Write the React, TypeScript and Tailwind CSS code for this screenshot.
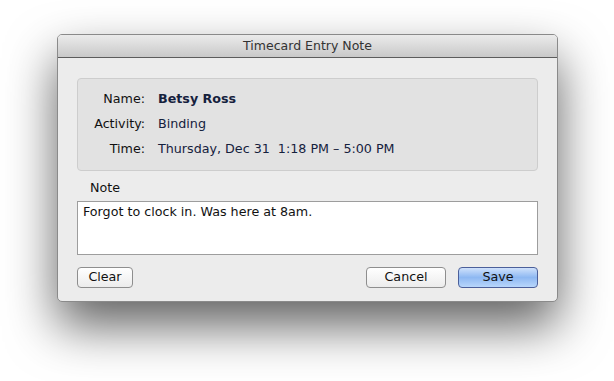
export default function App() {
  const rows = [
    { label: "Name:", value: "Betsy Ross", bold: true },
    { label: "Activity:", value: "Binding" },
    { label: "Time:", value: "Thursday, Dec 31\u00a0\u00a01:18 PM \u2013 5:00 PM" },
  ];

  return (
    <div className="w-[614px] h-[381px] bg-white pt-[34px] pl-[57px] font-['DejaVu_Sans',sans-serif] text-[12.7px] text-[#111]">
      <div className="w-[501px] h-[268px] rounded-[5px] bg-[#ececec] border border-[#8a8a8a] shadow-[0_24px_50px_rgba(0,0,0,0.62)] flex flex-col overflow-hidden">
        {/* barra de título */}
        <div className="h-[23px] shrink-0 bg-gradient-to-b from-[#ebebeb] to-[#c9c9c9] border-b border-[#5c5c5c] flex items-center justify-center">
          <span className="text-[12.5px] text-[#333]">Timecard Entry Note</span>
        </div>

        <div className="flex-1 flex flex-col pl-[19px] pr-[19px] pt-[20px]">
          <div className="h-[93px] rounded-[4px] bg-[#e2e2e2] border border-[#cdcdcd] pt-[7px] flex flex-col">
            {rows.map((r) => (
              <div key={r.label} className="h-[25px] flex items-center">
                <span className="w-[67px] text-right text-[#111]">{r.label}</span>
                <span className={`ml-[13px] text-[#15213d] ${r.bold ? "font-bold" : ""}`}>{r.value}</span>
              </div>
            ))}
          </div>

          <div className="mt-[8px] ml-[13px] h-[22px] leading-[18px]">Note</div>

          <div className="h-[54px] bg-white border border-[#9d9d9d] px-[5px] pt-[1px] leading-[18px]">
            Forgot to clock in. Was here at 8am.
          </div>

          <div className="mt-[12px] flex items-center">
            <button className="w-[56px] h-[21px] rounded-[4px] border border-[#8e8e8e] bg-gradient-to-b from-[#ffffff] to-[#ececec] leading-none">
              Clear
            </button>
            <div className="flex-1" />
            <button className="w-[80px] h-[21px] rounded-[4px] border border-[#8e8e8e] bg-gradient-to-b from-[#ffffff] to-[#ececec] leading-none">
              Cancel
            </button>
            <button className="ml-[12px] w-[80px] h-[21px] rounded-[4px] border border-[#4b5f9a] bg-gradient-to-b from-[#cfe1fb] via-[#8eb8f2] to-[#b8d6fb] leading-none">
              Save
            </button>
          </div>
        </div>
      </div>
    </div>
  );
}
